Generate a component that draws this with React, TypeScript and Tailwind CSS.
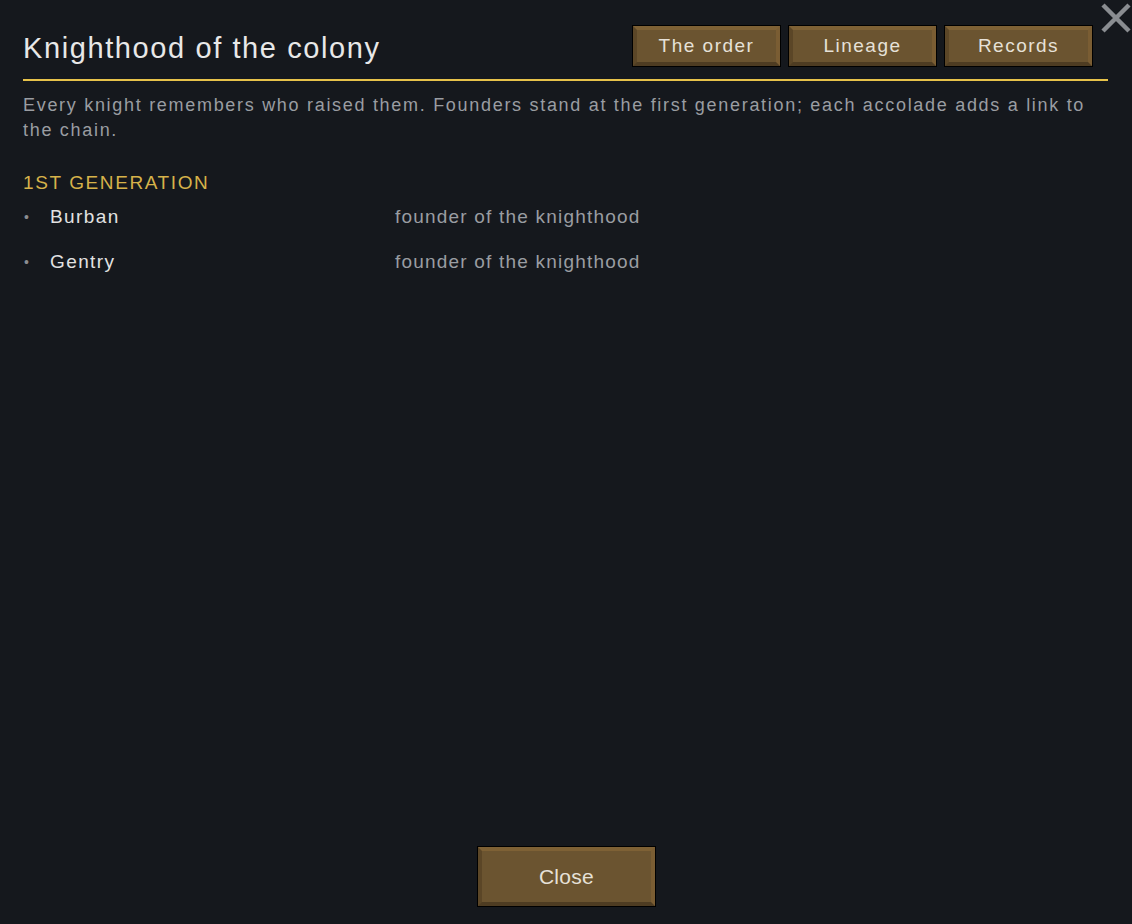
import React from 'react'

const FONT = { fontFamily: '"Liberation Sans", Arial, sans-serif' }

function BevelButton({ label, className = '' }: { label: string; className?: string }) {
  return (
    <div className={`border border-black ${className}`}>
      <div className="h-full w-full flex items-center justify-center border-4 border-t-[#7e6135] border-r-[#7a5d33] border-b-[#4e3c22] border-l-[#5b4627] bg-[#6b5430] text-[#e6e1d8]">
        {label}
      </div>
    </div>
  )
}

const members = [
  { name: 'Burban', note: 'founder of the knighthood' },
  { name: 'Gentry', note: 'founder of the knighthood' },
]

export default function App() {
  return (
    <div className="relative h-[924px] w-full bg-[#15181d] flex flex-col" style={FONT}>
      {/* Close X */}
      <svg className="absolute left-[1101px] top-[3px]" width="30" height="30" viewBox="0 0 30 30">
        <path d="M2 2 L28 28 M28 2 L2 28" stroke="#8a8d91" strokeWidth="4.5" />
      </svg>

      <div className="flex-1 pl-[23px] pr-[24px]">
        {/* Header */}
        <div className="flex items-end justify-between pt-[25px] pb-[12px] border-b-2 border-[#e6c24a] pr-[15px]">
          <h1 className="text-[29px] leading-[34px] tracking-[1.6px] text-[#e8e8e8] pb-[2px]">Knighthood of the colony</h1>
          <div className="flex gap-[7px] text-[19px] tracking-[1.5px]">
            <BevelButton label="The order" className="w-[149px] h-[42px]" />
            <BevelButton label="Lineage" className="w-[149px] h-[42px]" />
            <BevelButton label="Records" className="w-[149px] h-[42px]" />
          </div>
        </div>

        <p className="mt-[12px] text-[18px] leading-[25px] tracking-[1.7px] text-[#9a9da2]">
          Every knight remembers who raised them. Founders stand at the first generation; each accolade adds a link to the chain.
        </p>

        <div className="mt-[26px] text-[19px] leading-[28px] tracking-[1.6px] text-[#d6b24a]">1ST GENERATION</div>

        <ul className="mt-[-2px]">
          {members.map((m) => (
            <li key={m.name} className="flex items-center h-[45px] text-[19px]">
              <span className="w-[27px] pl-[1px] text-[#8a8d91] text-[14px]">•</span>
              <span className="w-[345px] tracking-[1.4px] text-[#e2e2e2]">{m.name}</span>
              <span className="tracking-[1.2px] text-[#9a9da2]">{m.note}</span>
            </li>
          ))}
        </ul>
      </div>

      {/* Footer */}
      <div className="flex justify-center pb-[17px]">
        <BevelButton label="Close" className="w-[179px] h-[61px] text-[21px] tracking-[0.3px] ml-[1px]" />
      </div>
    </div>
  )
}
